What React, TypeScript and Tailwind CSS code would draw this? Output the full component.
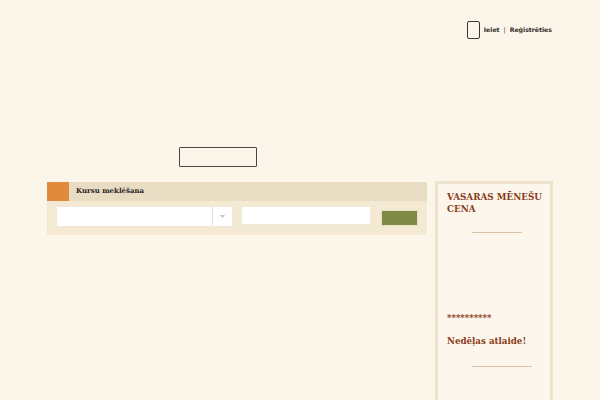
import React from "react";

export default function App() {
  return (
    <div className="min-h-[400px] w-full bg-[#fcf5ea] overflow-hidden">
      <div className="mx-auto w-[506px]">
        {/* top bar */}
        <div className="flex h-[147px] flex-col">
          <div className="flex items-center justify-end gap-[4px] pr-[1px] pt-[21px]">
            <div className="h-[18px] w-[13px] rounded-[2px] border border-[#3d3a36]" />
            <div
              className="flex items-center gap-[4px] text-[6.2px] font-bold text-[#2d2a26]"
              style={{ fontFamily: '"DejaVu Sans", sans-serif' }}
            >
              <span>Ieiet</span>
              <span className="font-normal">|</span>
              <span>Reģistrēties</span>
            </div>
          </div>
        </div>
        <div className="pl-[132px]">
          <div className="h-[20px] w-[78px] rounded-[1px] border-[1.5px] border-[#4a4744]" />
        </div>
        <div className="mt-[14px] flex items-start gap-[8px]">
          {/* search panel */}
          <div className="mt-[1px] w-[380px]">
            <div className="flex h-[19px] items-center bg-[#e8dcc3]">
              <div className="h-[19px] w-[22px] bg-[#e08a3e]" />
              <span
                className="ml-[7px] text-[7px] font-bold text-[#2b231c]"
                style={{ fontFamily: '"DejaVu Serif", serif' }}
              >
                Kursu meklēšana
              </span>
            </div>
            <div className="flex items-start bg-[#f4e9d3] pb-[8px] pl-[9px] pt-[5px]">
              <div className="flex h-[21px] w-[177px] items-center border border-[#efe7d9] bg-white">
                <div className="flex-1" />
                <div className="flex h-full w-[20px] items-center justify-center border-l border-[#e8e0d2]">
                  <svg width="5" height="3" viewBox="0 0 5 3">
                    <path d="M0 0 L5 0 L2.5 3 Z" fill="#c9c2b6" />
                  </svg>
                </div>
              </div>
              <div className="ml-[8px] h-[19px] w-[130px] border border-[#efe7d9] bg-white" />
              <div className="ml-[10px] mt-[4px] h-[16px] w-[37px] rounded-[1px] border border-[#e9e0c4] bg-[#7f8a47]" />
            </div>
          </div>
          {/* sidebar */}
          <div className="h-[230px] w-[118px] border-[3px] border-[#ede2cc] bg-[#fcf6ec] pl-[9px] pr-[3px] pt-[7px]">
            <div
              className="whitespace-nowrap text-[8.8px] font-bold leading-[12px] text-[#8a3b17]"
              style={{ fontFamily: '"DejaVu Serif", serif' }}
            >
              VASARAS MĒNEŠU
              <br />
              CENA
            </div>
            <div className="mt-[17px] flex pl-[25px]">
              <div className="h-px w-[50px] bg-[#dcc2a2]" />
            </div>
            <div
              className="mt-[80px] text-[8.5px] font-bold leading-[10px] text-[#8a3b17]"
              style={{ fontFamily: '"DejaVu Serif", serif' }}
            >
              **********
            </div>
            <div
              className="mt-[12px] text-[8.7px] font-bold leading-[12px] text-[#8a3b17]"
              style={{ fontFamily: '"DejaVu Serif", serif' }}
            >
              Nedēļas atlaide!
            </div>
            <div className="mt-[19px] flex pl-[25px]">
              <div className="h-px w-[60px] bg-[#dcc2a2]" />
            </div>
          </div>
        </div>
      </div>
    </div>
  );
}
